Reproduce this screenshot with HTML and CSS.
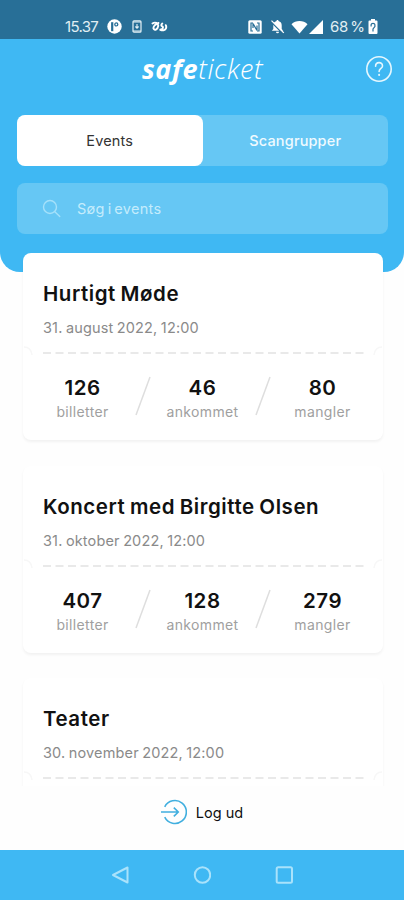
FILE: index.html
```html
<!DOCTYPE html>
<html lang="da">
<head>
  <meta charset="UTF-8">
  <title>Safeticket</title>
  <link rel="stylesheet" href="styles.css">
</head>
<body>

  <div class="statusbar">
    <span class="clock">15.37</span>
    <svg class="st-app" width="15" height="15" viewBox="0 0 15 15">
      <circle cx="7.5" cy="7.5" r="7.2" fill="#fff"/>
      <path d="M5.2 3.2v9" fill="none" stroke="#286f97" stroke-width="2.2"/>
      <circle cx="9.3" cy="5.4" r="1.5" fill="none" stroke="#286f97" stroke-width="1.3"/>
    </svg>
    <svg class="st-phone" width="10" height="13" viewBox="0 0 10 13">
      <rect x="1" y=".8" width="8" height="11.4" rx="1" fill="none" stroke="#e4f1f6" stroke-width="1.2"/>
      <path d="M1 2h8M1 11h8M5 4v4M3.4 6.5L5 8.2l1.6-1.7" fill="none" stroke="#e4f1f6" stroke-width="1.1"/>
    </svg>
    <svg class="st-link" width="17" height="12" viewBox="0 0 17 12">
      <path d="M1.5 2.5C4 .6 7.600 2 7.200 5.200 6.800 8.500 3.200 10 2.500 7.600 2 5.500 4.500 3 7.500 2M11.300 2.500c-1.500 1.300-1.200 2.400 0 2.900 1.500.7.200 3.300-2 3.400M14.800 4.200c1.200 2.300-.2 4.800-2.300 5.100-1.200.2-2.200-.1-3.200-.5" fill="none" stroke="#fff" stroke-width="1.900" stroke-linecap="round"/>
    </svg>
    <svg class="st-nfc" width="14" height="14" viewBox="0 0 14 14">
      <rect x=".3" y=".3" width="13.400" height="13.400" rx="1.500" fill="#fff"/>
      <path d="M5 3H3v8h2M9 3h2v8H9M5 3.500l4 7M5 3.500V8M9 10V5.500" fill="none" stroke="#286f97" stroke-width="1.200"/>
    </svg>
    <svg class="st-bell" width="15" height="15" viewBox="0 0 15 15">
      <path d="M7.500 1c.7 0 1 .4 1 1 2.200.6 3.200 2.300 3.200 4.300V10l1.500 1.800H1.800L3.300 10V6.300c0-2 1-3.700 3.200-4.300 0-.6.3-1 1-1zM6 12.700h3a1.500 1.500 0 0 1-3 0z" fill="#fff"/>
      <path d="M.8 2.500l12 12" stroke="#286f97" stroke-width="1.400"/>
      <path d="M1.500 1.600l12.300 12.300" stroke="#fff" stroke-width="1.300"/>
    </svg>
    <svg class="st-wifi" width="17" height="14" viewBox="0 0 17 14">
      <path d="M8.500 13.500L.5 4.200C4.500 0 12.500 0 16.500 4.200z" fill="#fff"/>
    </svg>
    <svg class="st-signal" width="14" height="14" viewBox="0 0 14 14">
      <path d="M14 0v14H0z" fill="#fff"/>
    </svg>
    <span class="battery">68 %</span>
    <svg class="st-batt" width="10" height="15" viewBox="0 0 10 15">
      <path d="M3 0h4v1.500h1.500q1 0 1 1V14q0 1-1 1h-7q-1 0-1-1V2.500q0-1 1-1H3z" fill="#fff"/>
      <path d="M3.100 7.500V6c0-2.300 3.800-2.300 3.800 0v1.500L5 10v2.500" fill="none" stroke="#286f97" stroke-width="1.200"/>
    </svg>
  </div>

  <header class="header">
    <div class="topbar">
      <div class="logo"><b>safe</b><span>ticket</span></div>
      <svg class="help" width="28" height="28" viewBox="0 0 28 28" fill="none" stroke="#e5f7fe" stroke-width="1.600" stroke-linecap="round">
        <circle cx="14" cy="14" r="12.200"/>
        <path d="M10.600 11.200c0-4.700 6.900-4.700 6.900-.3 0 2.500-3.400 2.600-3.400 5.600"/>
        <path d="M14.100 19.800v.2" stroke-width="2"/>
      </svg>
    </div>
    <div class="tabs">
      <div class="tab active"><span>Events</span></div>
      <div class="tab"><span>Scangrupper</span></div>
    </div>
    <div class="search">
      <svg width="20" height="20" viewBox="0 0 20 20" fill="none" stroke="#a5e1fa" stroke-width="1.400" stroke-linecap="round">
        <circle cx="8" cy="8" r="6.500"/>
        <path d="M12.800 12.800l5 4.600"/>
      </svg>
      <span>Søg i events</span>
    </div>
  </header>

  <main class="events">
    <article class="card">
      <div class="card-top">
        <h2>Hurtigt Møde</h2>
        <p>31. august 2022, 12:00</p>
      </div>
      <svg class="tear" width="360" height="12" viewBox="0 0 360 12" fill="none">
        <path d="M1 2q7 0 8 8M359 2q-7 0-8 8" stroke="#f7f7f7" stroke-width="1.500"/>
        <path d="M20 8h323" stroke="#e9e9e9" stroke-width="2" stroke-dasharray="8 4.500"/>
      </svg>
      <div class="stats">
        <div class="stat"><b>126</b><span>billetter</span></div>
        <svg class="slash" width="16" height="40" viewBox="0 0 16 40"><path d="M15 1L1 39" stroke="#dedede" stroke-width="1.500"/></svg>
        <div class="stat"><b>46</b><span>ankommet</span></div>
        <svg class="slash" width="16" height="40" viewBox="0 0 16 40"><path d="M15 1L1 39" stroke="#dedede" stroke-width="1.500"/></svg>
        <div class="stat"><b>80</b><span>mangler</span></div>
      </div>
    </article>

    <article class="card">
      <div class="card-top">
        <h2>Koncert med Birgitte Olsen</h2>
        <p>31. oktober 2022, 12:00</p>
      </div>
      <svg class="tear" width="360" height="12" viewBox="0 0 360 12" fill="none">
        <path d="M1 2q7 0 8 8M359 2q-7 0-8 8" stroke="#f7f7f7" stroke-width="1.500"/>
        <path d="M20 8h323" stroke="#e9e9e9" stroke-width="2" stroke-dasharray="8 4.500"/>
      </svg>
      <div class="stats">
        <div class="stat"><b>407</b><span>billetter</span></div>
        <svg class="slash" width="16" height="40" viewBox="0 0 16 40"><path d="M15 1L1 39" stroke="#dedede" stroke-width="1.500"/></svg>
        <div class="stat"><b>128</b><span>ankommet</span></div>
        <svg class="slash" width="16" height="40" viewBox="0 0 16 40"><path d="M15 1L1 39" stroke="#dedede" stroke-width="1.500"/></svg>
        <div class="stat"><b>279</b><span>mangler</span></div>
      </div>
    </article>

    <article class="card">
      <div class="card-top">
        <h2>Teater</h2>
        <p>30. november 2022, 12:00</p>
      </div>
      <svg class="tear" width="360" height="12" viewBox="0 0 360 12" fill="none">
        <path d="M1 2q7 0 8 8M359 2q-7 0-8 8" stroke="#f7f7f7" stroke-width="1.500"/>
        <path d="M20 8h323" stroke="#e9e9e9" stroke-width="2" stroke-dasharray="8 4.500"/>
      </svg>
    </article>
  </main>

  <div class="logout">
    <svg width="26" height="26" viewBox="0 0 28 28" fill="none" stroke="#41afdf" stroke-width="1.700">
      <path d="M4 8.500a12.300 12.300 0 1 1 0 11"/>
      <path d="M0 14h18.500M13.800 9.300l4.800 4.700-4.800 4.700"/>
    </svg>
    <span>Log ud</span>
  </div>

  <nav class="navbar">
    <svg width="18" height="18" viewBox="0 0 18 18"><path d="M16.500 1.500v15L2 9z"/></svg>
    <svg width="18" height="18" viewBox="0 0 18 18"><circle cx="9.500" cy="9" r="7.700"/></svg>
    <svg width="18" height="18" viewBox="0 0 18 18"><rect x="1.700" y="1.200" width="15.300" height="15.600" rx="1.500"/></svg>
  </nav>

</body>
</html>
```
FILE: styles.css
```css
* {
  box-sizing: border-box;
}

body {
  margin: 0;
  height: 900px;
  display: flex;
  flex-direction: column;
  overflow: hidden;
  background: #fefefe;
  font-family: Inter, "Liberation Sans", sans-serif;
  color: #111;
}

svg {
  display: block;
  flex: none;
}

h2, p {
  margin: 0;
  white-space: nowrap;
}

.statusbar {
  flex: none;
  height: 39px;
  padding: 14px 26px 0 65px;
  display: flex;
  align-items: center;
  background: #286f97;
  color: #e1eef3;
  font-size: 15px;
  white-space: nowrap;
}

.clock {
  width: 42px;
  letter-spacing: -0.7px;
}

.st-phone {
  margin-left: 10px;
}

.st-link {
  margin-left: 9px;
}

.st-nfc {
  margin-left: auto;
}

.st-bell {
  margin-left: 8px;
}

.st-wifi {
  margin-left: 6px;
}

.st-signal {
  margin-left: 1px;
}

.battery {
  width: 38px;
  margin-left: 7px;
  letter-spacing: -0.2px;
  word-spacing: -2px;
}

.header {
  flex: none;
  height: 233px;
  padding: 0 16px 0 17px;
  background: #3fb8f3;
  border-radius: 0 0 20px 20px;
}

.topbar {
  height: 76px;
  padding: 15px 0 0;
  display: grid;
  grid-template-columns: 1fr auto 1fr;
  align-items: start;
}

.logo {
  grid-column: 2;
  font-family: "Open Sans", sans-serif;
  font-style: italic;
  font-size: 27px;
  line-height: 30px;
  color: #fff;
  letter-spacing: 0.6px;
}

.logo b {
  font-weight: 700;
}

.logo span {
  font-weight: 300;
}

.help {
  justify-self: end;
  margin: 1px -5px 0 0;
}

.tabs {
  height: 51px;
  display: flex;
  border-radius: 8px;
  background: #66c7f4;
}

.tab {
  flex: 1;
  display: flex;
  align-items: center;
  justify-content: center;
  border-radius: 8px;
  font-size: 14.5px;
  font-weight: 500;
  letter-spacing: 0.15px;
  color: #effaff;
}

.tab.active {
  background: #fff;
  color: #333;
  font-weight: 400;
}

.search {
  height: 51px;
  margin-top: 17px;
  padding-left: 25px;
  display: flex;
  align-items: center;
  gap: 15px;
  border-radius: 8px;
  background: #66c7f4;
  color: #c4ecfc;
  font-size: 14.5px;
  letter-spacing: 0.3px;
  word-spacing: -1.5px;
}

.events {
  flex: 1;
  min-height: 0;
  margin-top: -19px;
  padding: 0 21.5px 0 22.5px;
  display: flex;
  flex-direction: column;
  gap: 25.5px;
  overflow: hidden;
}

.card {
  flex: none;
  height: 187px;
  border-radius: 8px;
  background: #fff;
  box-shadow: 0 2px 3px rgba(0, 0, 0, 0.05);
}

.card-top {
  height: 92px;
  padding: 28px 0 0 20.5px;
}

.card h2 {
  font-size: 20.5px;
  line-height: 26px;
  font-weight: 600;
  letter-spacing: 0.55px;
  word-spacing: -1px;
}

.card p {
  margin-top: 11px;
  font-size: 14.5px;
  line-height: 20px;
  letter-spacing: 0.15px;
  word-spacing: -0.8px;
  color: #8a8a8a;
}

.stats {
  padding: 18px 0 0;
  display: flex;
}

.stat {
  width: 120px;
  display: flex;
  flex-direction: column;
  align-items: center;
}

.stat b {
  font-size: 20.5px;
  line-height: 26px;
  font-weight: 600;
  letter-spacing: 0.5px;
}

.stat span {
  font-size: 14px;
  line-height: 22px;
  letter-spacing: 0.35px;
  color: #a0a0a0;
}

.slash {
  margin: 1px -8px 0;
}

.logout {
  flex: none;
  height: 64px;
  padding: 0 0 12px;
  display: flex;
  align-items: center;
  justify-content: center;
  gap: 9px;
  background: #fefefe;
  font-size: 14.5px;
}

.navbar {
  flex: none;
  height: 50px;
  display: flex;
  align-items: center;
  justify-content: center;
  gap: 64px;
  background: #3fb8f3;
}

.navbar svg {
  fill: none;
  stroke: #a9e2fb;
  stroke-width: 2;
  stroke-linejoin: round;
}
```
